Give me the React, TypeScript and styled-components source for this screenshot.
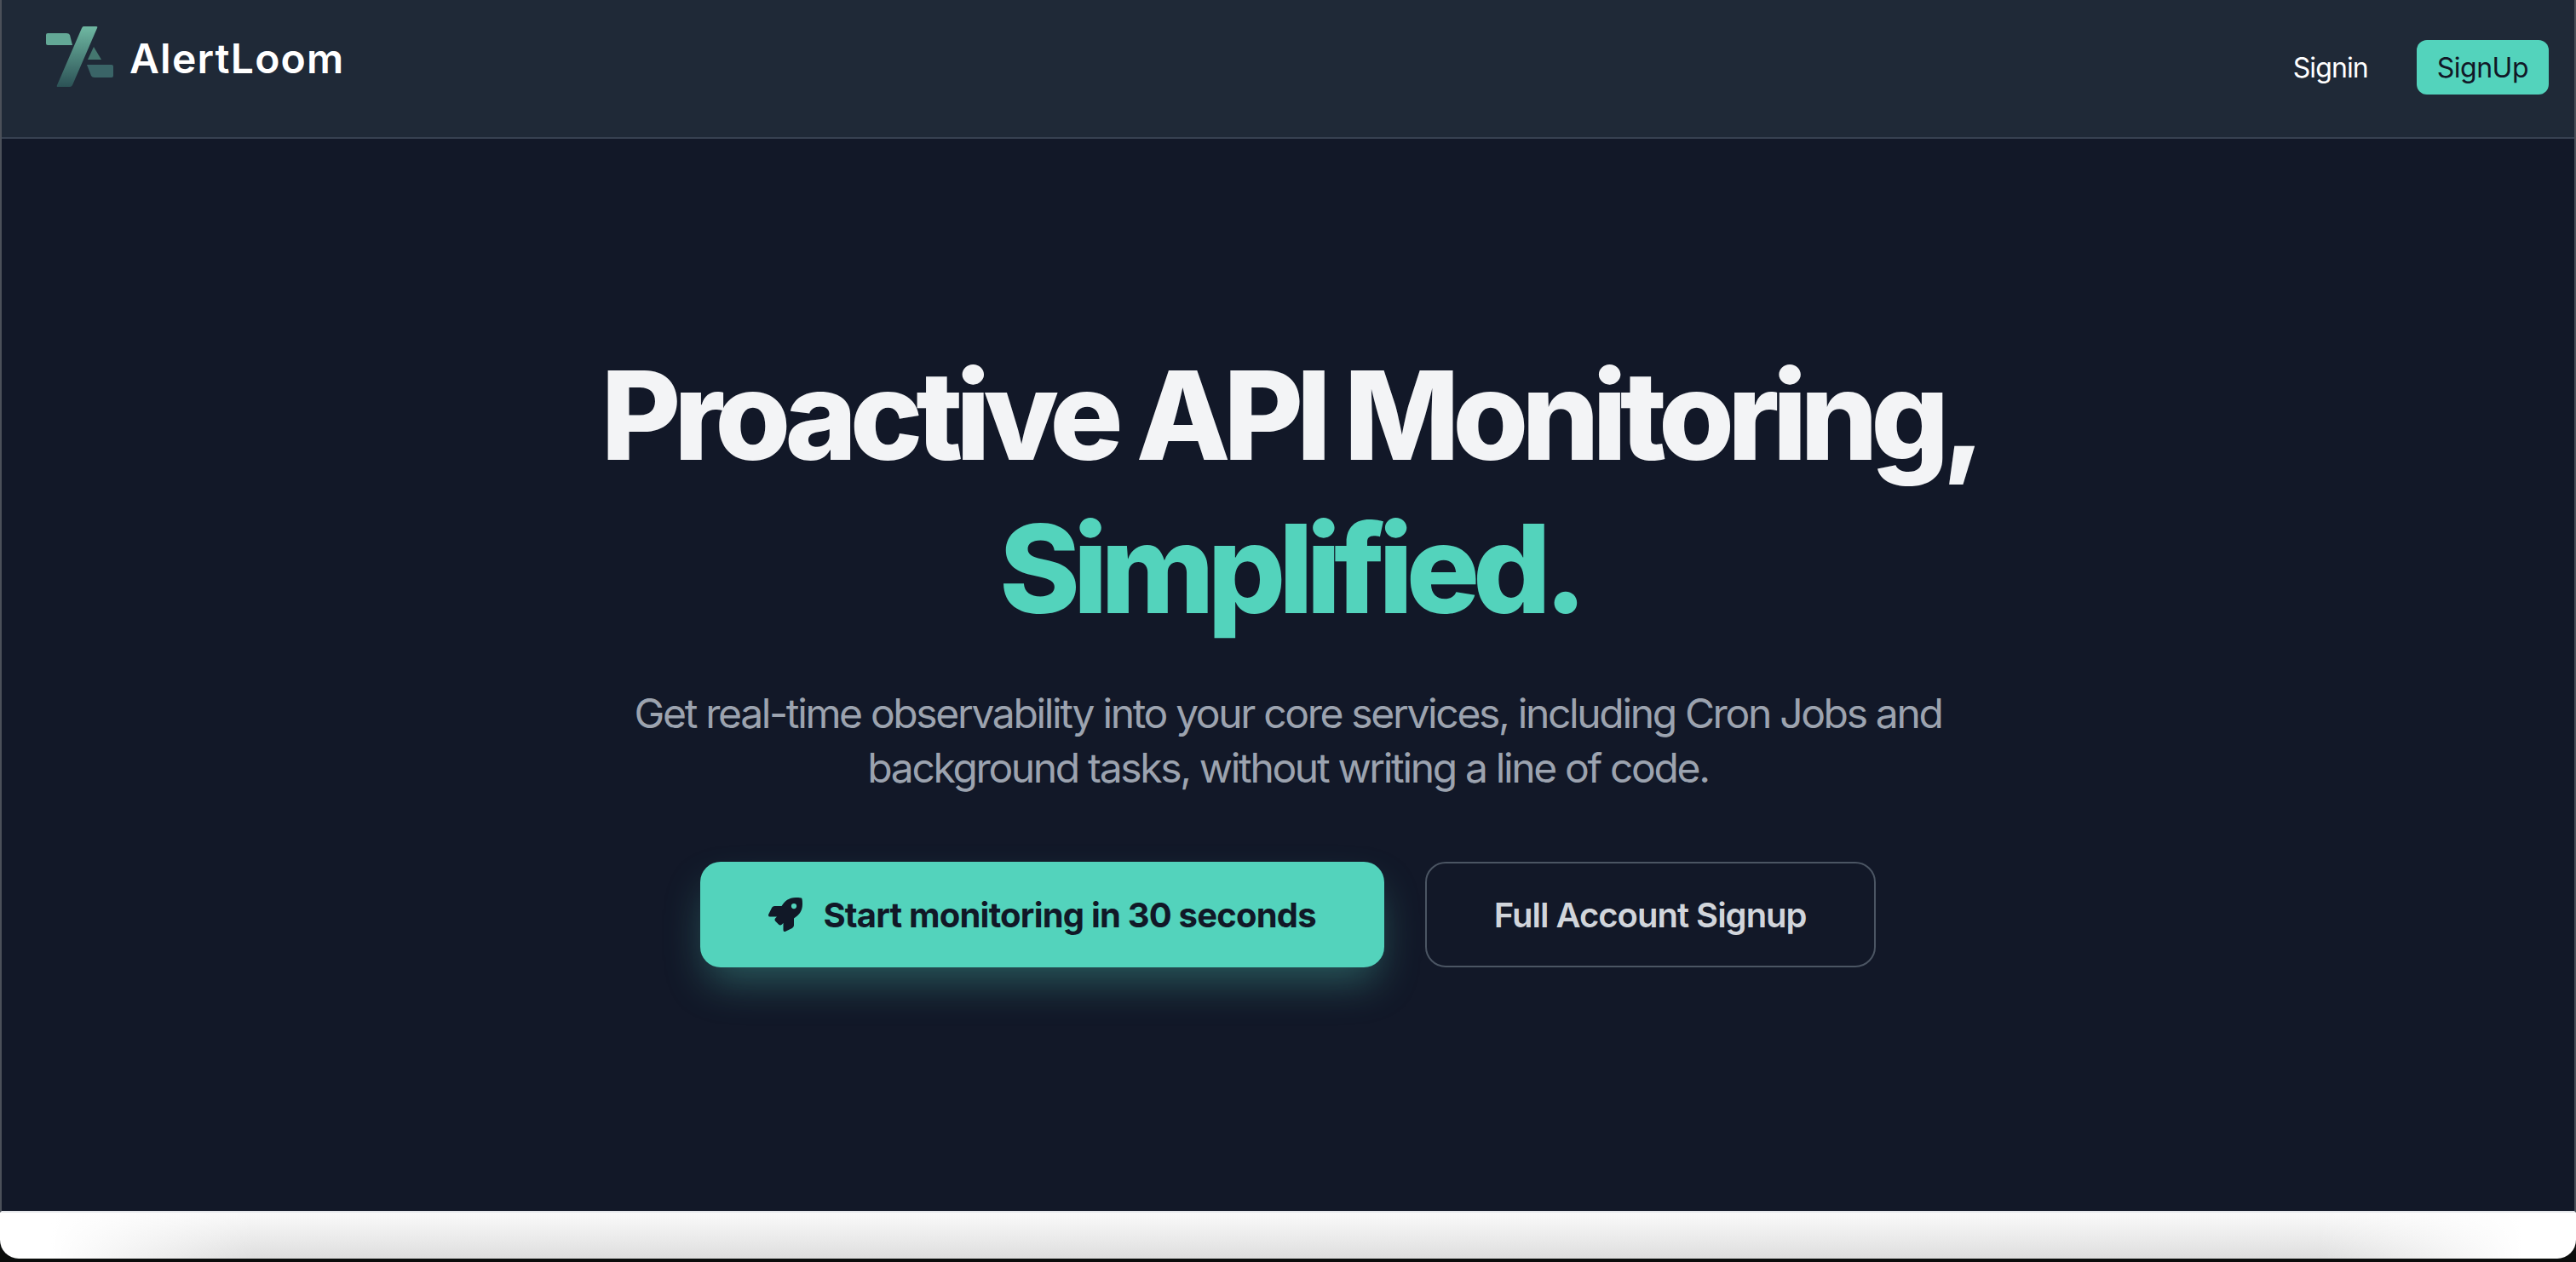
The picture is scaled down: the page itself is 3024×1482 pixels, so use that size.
import { FC } from "react";
import styled, { createGlobalStyle } from "styled-components";
import { FaRocket } from "react-icons/fa";

const GlobalStyle = createGlobalStyle`
  html, body {
    margin: 0;
    padding: 0;
    background: #0b0d0c;
    font-family: Inter, "Liberation Sans", sans-serif;
  }
`;

const Page = styled.div`
  display: flex;
  flex-direction: column;
  width: 3024px;
  height: 1482px;
  overflow: hidden;
`;

const Window = styled.div`
  display: flex;
  flex-direction: column;
  height: 1424px;
  box-sizing: border-box;
  border-left: 2px solid #4b5059;
  border-right: 2px solid #4b5059;
  border-bottom: 2px solid #e5e7eb;
  background: #121828;
`;

const Header = styled.header`
  display: flex;
  align-items: flex-start;
  justify-content: space-between;
  height: 163px;
  box-sizing: border-box;
  padding: 31px 30px 0 52px;
  background: #1f2937;
  border-bottom: 2px solid #374151;
`;

const Brand = styled.div`
  display: flex;
  align-items: center;
  gap: 18px;
`;

const BrandName = styled.span`
  margin-top: 3px;
  font-size: 48px;
  line-height: 52px;
  font-weight: 600;
  letter-spacing: 1.2px;
  color: #ffffff;
`;

const Nav = styled.nav`
  display: flex;
  align-items: center;
  gap: 57px;
  margin-top: 16px;
`;

const SigninLink = styled.a`
  margin-top: 2px;
  font-size: 32px;
  line-height: 48px;
  letter-spacing: -0.9px;
  color: #ffffff;
`;

const SignupButton = styled.button`
  height: 64px;
  padding: 0 24px;
  border: 0;
  border-radius: 12px;
  background: #53d3bc;
  color: #111827;
  font-family: inherit;
  font-size: 32px;
  letter-spacing: -0.5px;
`;

const Hero = styled.main`
  display: flex;
  flex: 1;
  flex-direction: column;
  align-items: center;
  padding-top: 235px;
`;

const Title = styled.h1`
  margin: 0;
  padding-left: 4px;
  font-size: 144px;
  line-height: 180px;
  font-weight: 800;
  letter-spacing: -8.3px;
  text-align: center;
  color: #f3f4f6;
`;

const Accent = styled.span`
  display: block;
  color: #53d3bc;
`;

const Subtitle = styled.p`
  width: 1600px;
  margin: 48px 0 0;
  font-size: 48px;
  line-height: 64px;
  letter-spacing: -2.35px;
  text-align: center;
  color: #9ca3af;
`;

const Actions = styled.div`
  display: flex;
  gap: 48px;
  margin-top: 78px;
`;

const ActionButton = styled.button<{ $primary?: boolean }>`
  display: inline-flex;
  align-items: center;
  justify-content: center;
  gap: 24px;
  height: 124px;
  padding: 0 ${(p) => (p.$primary ? "80px" : "79px")};
  box-sizing: border-box;
  border-radius: 24px;
  font-family: inherit;
  font-size: 40px;
  font-weight: ${(p) => (p.$primary ? 700 : 600)};
  letter-spacing: ${(p) => (p.$primary ? "-0.8px" : "-1px")};
  border: ${(p) => (p.$primary ? "0" : "2px solid #4b5563")};
  background: ${(p) => (p.$primary ? "#53d3bc" : "transparent")};
  color: ${(p) => (p.$primary ? "#111827" : "#d1d5db")};
  box-shadow: ${(p) =>
    p.$primary ? "0 24px 48px -8px rgba(83, 211, 188, 0.35)" : "none"};
`;

const BottomStrip = styled.div`
  height: 54px;
  border-radius: 0 0 22px 22px;
  background:
    linear-gradient(
      to right,
      #ffffff 60px,
      rgba(255, 255, 255, 0) 300px,
      rgba(255, 255, 255, 0) 2720px,
      #ffffff 2960px
    ),
    linear-gradient(to bottom, #fafafa, #dedede);
`;

const Logo: FC = () => (
  <svg width="80" height="72" viewBox="54 31 80 72">
    <defs>
      <linearGradient id="logoFill" x1="0" y1="0" x2="0" y2="1" gradientUnits="objectBoundingBox">
        <stop offset="0" stopColor="#6fb8a2" />
        <stop offset="1" stopColor="#2c5256" />
      </linearGradient>
    </defs>
    <path
      d="M98 31H113Q115 31 114 33L85 100Q84 102 82 102H68Q66 102 67 100L96 33Q97 31 98 31Z"
      fill="url(#logoFill)"
    />
    <path d="M54 41Q54 39 56 39H78Q81 39 82 41L85 53H56Q54 53 54 51Z" fill="#63a896" />
    <path d="M110 55L119 70H103Z" fill="#44776f" />
    <path d="M102 76H131Q133 76 133 78V89Q133 91 131 91H111Q108 91 107 89Z" fill="#3a6467" />
  </svg>
);

const App: FC = () => (
  <Page>
    <GlobalStyle />
    <Window>
      <Header>
        <Brand>
          <Logo />
          <BrandName>AlertLoom</BrandName>
        </Brand>
        <Nav>
          <SigninLink>Signin</SigninLink>
          <SignupButton>SignUp</SignupButton>
        </Nav>
      </Header>
      <Hero>
        <Title>
          Proactive API Monitoring,
          <Accent>Simplified.</Accent>
        </Title>
        <Subtitle>
          Get real-time observability into your core services, including Cron
          Jobs and background tasks, without writing a line of code.
        </Subtitle>
        <Actions>
          <ActionButton $primary>
            <FaRocket size={40} />
            Start monitoring in 30 seconds
          </ActionButton>
          <ActionButton>Full Account Signup</ActionButton>
        </Actions>
      </Hero>
    </Window>
    <BottomStrip />
  </Page>
);

export default App;
